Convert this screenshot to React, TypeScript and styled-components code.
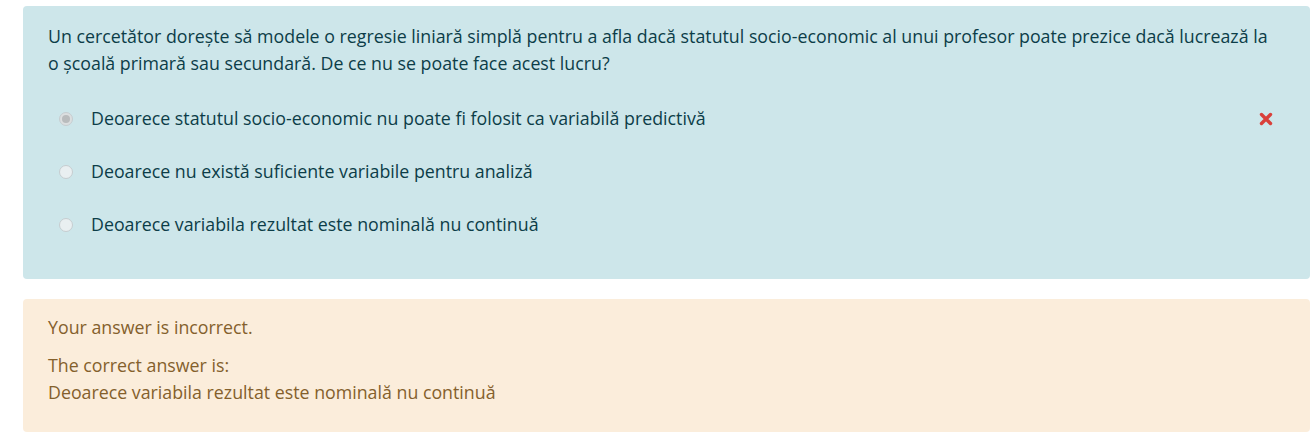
import React from "react";
import styled, { createGlobalStyle } from "styled-components";

const Global = createGlobalStyle`
  html, body { margin: 0; padding: 0; background: #ffffff; }
  body { font-family: "Open Sans", "Noto Sans", sans-serif; }
  * { box-sizing: border-box; }
`;

const Page = styled.div`
  display: flex;
  flex-direction: column;
  gap: 20px;
  padding: 6px 3px 0 23px;
  width: 1313px;
`;

const Formulation = styled.div`
  background: #cde6ea;
  color: #0c3d48;
  border-radius: 4px;
  padding: 17px 25px 41px 25px;
  font-size: 17.8px;
  line-height: 27px;
`;

const QText = styled.div`
  margin: 0 0 28px 0;
  padding-right: 16px;
`;

const Answers = styled.div`
  display: flex;
  flex-direction: column;
  gap: 26px;
`;

const Option = styled.div`
  display: flex;
  align-items: center;
  position: relative;
  padding-left: 11px;
`;

const Radio = styled.span<{ $checked?: boolean }>`
  width: 14px;
  height: 14px;
  border-radius: 50%;
  border: 1px solid #c6cdd0;
  background: ${(p) => (p.$checked ? "#dcdfe0" : "#e9eff1")};
  display: flex;
  align-items: center;
  justify-content: center;
  flex: none;
  margin-right: 18px;
  &::after {
    content: "";
    display: ${(p) => (p.$checked ? "block" : "none")};
    width: 8px;
    height: 8px;
    border-radius: 50%;
    background: #b9bcbd;
  }
`;

const Mark = styled.span`
  position: absolute;
  right: 12px;
  top: 50%;
  transform: translateY(-50%);
  display: flex;
`;

const Outcome = styled.div`
  background: #fbeddb;
  color: #84602c;
  border-radius: 4px;
  padding: 15px 25px 26px 25px;
  font-size: 17.8px;
  line-height: 27px;
`;

const Feedback = styled.div`
  margin-bottom: 11px;
`;

const options = [
  { text: "Deoarece statutul socio-economic nu poate fi folosit ca variabilă predictivă", checked: true, wrong: true },
  { text: "Deoarece nu există suficiente variabile pentru analiză" },
  { text: "Deoarece variabila rezultat este nominală nu continuă" },
];

export default function App() {
  return (
    <>
      <Global />
      <Page>
        <Formulation>
          <QText>
            Un cercetător dorește să modele o regresie liniară simplă pentru a afla dacă statutul socio-economic al unui profesor poate prezice dacă lucrează la o școală primară sau secundară. De ce nu se poate face acest lucru?
          </QText>
          <Answers>
            {options.map((o) => (
              <Option key={o.text}>
                <Radio $checked={o.checked} />
                <span>{o.text}</span>
                {o.wrong && (
                  <Mark>
                    <svg width="14" height="14" viewBox="0 0 14 14">
                      <path d="M2.5 2.5 L11.5 11.5 M11.5 2.5 L2.5 11.5" stroke="#d9403a" strokeWidth="3.4" strokeLinecap="round" />
                    </svg>
                  </Mark>
                )}
              </Option>
            ))}
          </Answers>
        </Formulation>
        <Outcome>
          <Feedback>Your answer is incorrect.</Feedback>
          <div>The correct answer is:</div>
          <div>Deoarece variabila rezultat este nominală nu continuă</div>
        </Outcome>
      </Page>
    </>
  );
}
